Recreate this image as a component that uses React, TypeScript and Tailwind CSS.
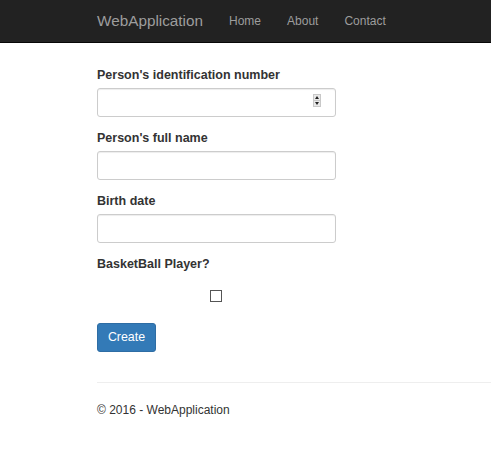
import React from "react";

const fields = [
  { label: "Person's identification number", spinner: true },
  { label: "Person's full name", spinner: false },
  { label: "Birth date", spinner: false },
];

function Spinner() {
  return (
    <div className="absolute right-[15px] top-[6px] flex h-[13px] w-[8px] flex-col border border-[#c8c8c8] bg-[#e8e8e8]">
      <div className="flex flex-1 items-center justify-center border-b border-[#c8c8c8]">
        <div className="h-0 w-0 border-x-[2.5px] border-b-[3px] border-x-transparent border-b-[#222]" />
      </div>
      <div className="flex flex-1 items-center justify-center">
        <div className="h-0 w-0 border-x-[2.5px] border-t-[3px] border-x-transparent border-t-[#222]" />
      </div>
    </div>
  );
}

export default function App() {
  return (
    <div className="min-h-[462px] bg-white font-['Liberation_Sans',Arial,sans-serif] text-[#333]">
      <nav className="flex h-[43px] items-center border-b border-[#080808] bg-[#222] pl-[97px]">
        <span className="text-[15.3px] text-[#9d9d9d]">WebApplication</span>
        <div className="ml-[26px] flex gap-[26px] text-[12px] text-[#9d9d9d]">
          <span>Home</span>
          <span>About</span>
          <span>Contact</span>
        </div>
      </nav>

      <div className="pl-[97px] pt-[24px]">
        {fields.map((f) => (
          <div key={f.label} className="mb-[13px]">
            <label className="mb-[4px] block text-[12.5px] font-bold leading-[17px]">{f.label}</label>
            <div className="relative w-[239px]">
              <input
                type="text"
                className="block h-[29px] w-full rounded-[3px] border border-[#ccc] bg-white px-[10px] text-[12px] shadow-[inset_0_1px_1px_rgba(0,0,0,0.075)] outline-none"
              />
              {f.spinner && <Spinner />}
            </div>
          </div>
        ))}

        <div>
          <label className="block text-[12.5px] font-bold leading-[17px]">BasketBall Player?</label>
          <div className="ml-[113px] mt-[17px] h-[12px] w-[12px] border border-[#555] bg-white" />
        </div>

        <button className="mt-[21px] h-[29px] w-[59px] rounded-[3px] border border-[#2e6da4] bg-[#337ab7] text-[12.4px] text-white">
          Create
        </button>

        <hr className="mt-[30px] border-t border-[#eee]" />

        <footer className="pt-[19px] text-[12px] leading-[17px]">© 2016 - WebApplication</footer>
      </div>
    </div>
  );
}
